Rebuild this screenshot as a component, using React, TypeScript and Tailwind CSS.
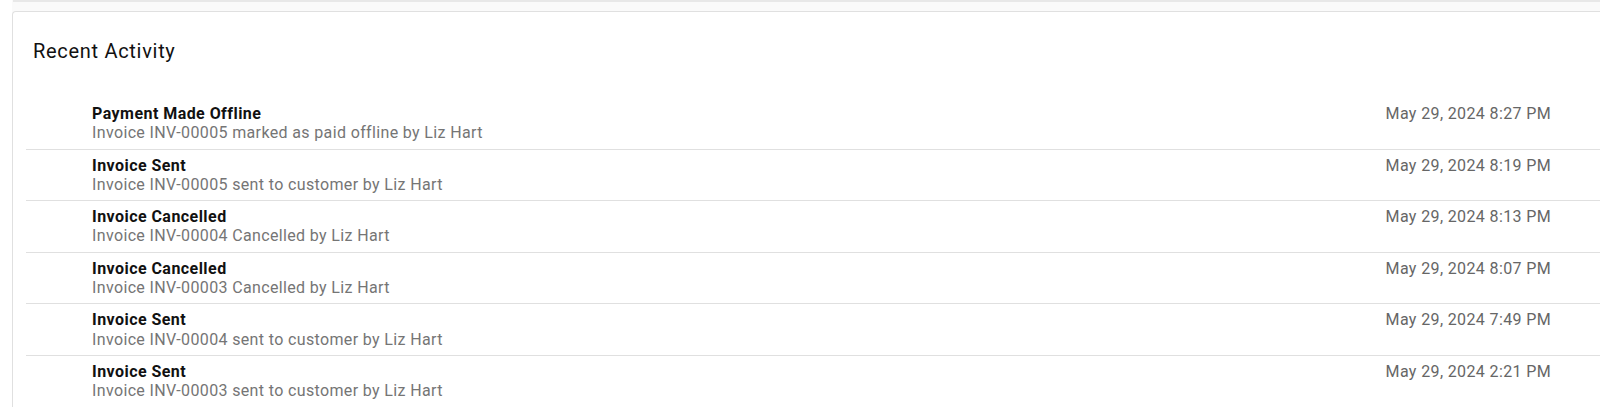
const activities = [
  {
    title: 'Payment Made Offline',
    detail: 'Invoice INV-00005 marked as paid offline by Liz Hart',
    date: 'May 29, 2024 8:27 PM',
  },
  {
    title: 'Invoice Sent',
    detail: 'Invoice INV-00005 sent to customer by Liz Hart',
    date: 'May 29, 2024 8:19 PM',
  },
  {
    title: 'Invoice Cancelled',
    detail: 'Invoice INV-00004 Cancelled by Liz Hart',
    date: 'May 29, 2024 8:13 PM',
  },
  {
    title: 'Invoice Cancelled',
    detail: 'Invoice INV-00003 Cancelled by Liz Hart',
    date: 'May 29, 2024 8:07 PM',
  },
  {
    title: 'Invoice Sent',
    detail: 'Invoice INV-00004 sent to customer by Liz Hart',
    date: 'May 29, 2024 7:49 PM',
  },
  {
    title: 'Invoice Sent',
    detail: 'Invoice INV-00003 sent to customer by Liz Hart',
    date: 'May 29, 2024 2:21 PM',
  },
]

const ActivityRow = ({ title, detail, date }: (typeof activities)[number]) => (
  <li className="flex justify-between border-b border-[#e0e0e0] pl-[66px] pr-[49px] pt-[6px] pb-[6px] leading-[19.3px] text-[16px]">
    <div className="flex flex-col">
      <span className="font-bold tracking-[0.45px] text-[#111]">{title}</span>
      <span className="tracking-[0.36px] text-[#757575]">{detail}</span>
    </div>
    <span className="tracking-[0.37px] text-[#666]">{date}</span>
  </li>
)

const App = () => {
  return (
    <div
      className="h-[407px] overflow-hidden bg-white pl-[12px]"
      style={{ fontFamily: 'Roboto, "Liberation Sans", sans-serif' }}
    >
      <div className="h-full bg-[#fafafa]">
        <div className="ml-[1px] h-[2px] bg-[#e8e8e8]" />
        <div className="mt-[9px] h-[420px] rounded-l-[4px] border border-r-0 border-[#e0e0e0] bg-white">
          <h2 className="pl-[20px] pt-[25px] text-[20px] leading-[28px] tracking-[0.7px] text-[#111]">
            Recent Activity
          </h2>
          <ul className="ml-[13px] mt-[33px]">
            {activities.map((a, i) => (
              <ActivityRow key={i} {...a} />
            ))}
          </ul>
        </div>
      </div>
    </div>
  )
}

export default App
